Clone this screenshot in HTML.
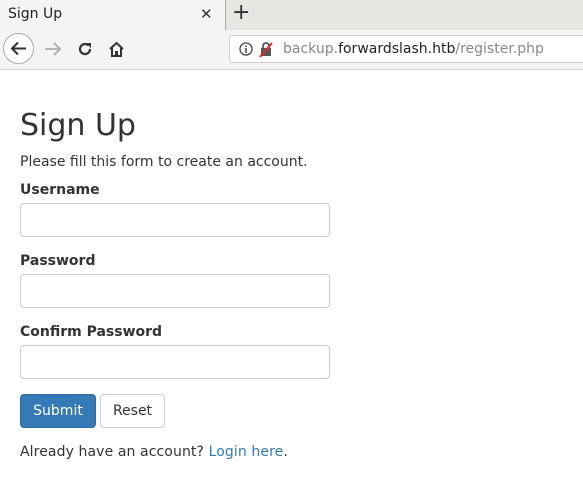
<!DOCTYPE html>
<html><head><style>
body{margin:0;width:583px;height:486px;overflow:hidden;background:#fff;font-family:"DejaVu Sans",sans-serif;color:#333}
.tabbar{position:absolute;top:0;left:0;width:583px;height:30px;background:#e8e6e3}
.tab{position:absolute;left:0;top:0;width:225px;height:30px;background:#f5f4f3;border-right:1px solid #aaa}
.tab span{position:absolute;left:8px;top:6px;font-size:14px;color:#222}
.tab .x{left:200px;top:5px;font-size:15px;color:#333}
.plus{position:absolute;left:232px;top:0;font-size:22px;color:#333}
.toolbar{position:absolute;top:30px;left:0;width:583px;height:39px;background:#f5f4f3;border-bottom:1px solid #d0cfcd}
.back{position:absolute;left:3px;top:3px;width:31px;height:31px;border:1px solid #aaa;border-radius:50%;background:#fff;box-sizing:border-box}
.url{position:absolute;left:229px;top:5px;width:360px;height:28px;background:#fff;border:1px solid #ccc;border-radius:3px;box-sizing:border-box;font-size:14px;color:#888}
.url .t{position:absolute;left:53px;top:5px}
.url b{font-weight:normal;color:#222}
.main{position:absolute;left:20px;top:0}
h2{position:absolute;top:108px;margin:0;font-weight:normal;font-size:30px;white-space:nowrap}
p,label{position:absolute;margin:0;font-size:14px;white-space:nowrap}
label{font-weight:bold}
.in{position:absolute;width:310px;height:34px;border:1px solid #ccc;border-radius:4px;box-sizing:border-box}
.btn{position:absolute;top:394px;height:34px;border-radius:4px;box-sizing:border-box;font-size:14px;text-align:center;line-height:32px}
a{color:#337ab7;text-decoration:none}
</style></head><body>
<div class="tabbar"><div class="tab"><span>Sign Up</span><span class="x">✕</span></div><div class="plus">+</div></div>
<div class="toolbar">
<div class="back"><svg width="29" height="29" viewBox="0 0 29 29"><path d="M22 14.5H8M14 8.5L8 14.5L14 20.5" stroke="#333" stroke-width="2" fill="none"/></svg></div>
<svg style="position:absolute;left:42px;top:9px" width="22" height="20" viewBox="0 0 22 20"><path d="M3 10H18M12 4L18 10L12 16" stroke="#aaa" stroke-width="1.8" fill="none"/></svg>
<svg style="position:absolute;left:77px;top:11px" width="16" height="16" viewBox="0 0 16 16"><path d="M13 8A5 5 0 1 1 11.5 4.5" stroke="#333" stroke-width="2.2" fill="none"/><path d="M9 2H14V7Z" fill="#333"/></svg>
<svg style="position:absolute;left:108px;top:11px" width="17" height="17" viewBox="0 0 17 17"><path d="M2 8L8.5 2L15 8M4 7V15H13V7" stroke="#333" stroke-width="2" fill="none"/><rect x="7" y="10" width="3" height="5" fill="#333"/></svg>
<div class="url"><svg style="position:absolute;left:9px;top:6px" width="14" height="14" viewBox="0 0 14 14"><circle cx="7" cy="7" r="6" stroke="#444" stroke-width="1.3" fill="none"/><path d="M7 6V11M7 3.5V5" stroke="#444" stroke-width="1.5"/></svg><svg style="position:absolute;left:28px;top:5px" width="16" height="16" viewBox="0 0 16 16"><rect x="3" y="7" width="10" height="8" fill="#555"/><path d="M5 7V5A3 3 0 0 1 11 5V7" stroke="#555" stroke-width="1.8" fill="none"/><path d="M2 16L14 2" stroke="#e22" stroke-width="2"/></svg><span class="t">backup.<b>forwardslash.htb</b>/register.php</span></div>
</div>
<div class="main">
<h2>Sign Up</h2>
<p style="top:154px">Please fill this form to create an account.</p>
<label style="top:182px">Username</label>
<div class="in" style="top:203px"></div>
<label style="top:253px">Password</label>
<div class="in" style="top:274px"></div>
<label style="top:324px">Confirm Password</label>
<div class="in" style="top:345px"></div>
<div class="btn" style="left:0;width:76px;background:#337ab7;border:1px solid #2e6da4;color:#fff">Submit</div>
<div class="btn" style="left:80px;width:65px;border:1px solid #ccc;color:#333">Reset</div>
<p style="top:444px;letter-spacing:0.1px">Already have an account? <a>Login here</a>.</p>
</div>
</body></html>
